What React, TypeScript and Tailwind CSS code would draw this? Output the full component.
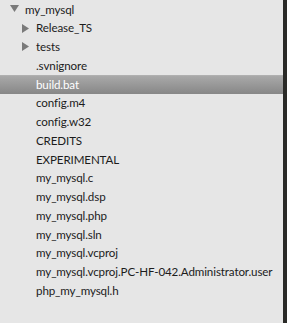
import React from "react";

const files = [
  ".svnignore",
  "build.bat",
  "config.m4",
  "config.w32",
  "CREDITS",
  "EXPERIMENTAL",
  "my_mysql.c",
  "my_mysql.dsp",
  "my_mysql.php",
  "my_mysql.sln",
  "my_mysql.vcproj",
  "my_mysql.vcproj.PC-HF-042.Administrator.user",
  "php_my_mysql.h",
];

function Down() {
  return (
    <svg width="9" height="8" viewBox="0 0 9 8">
      <polygon points="0,0 9,0 4.5,7" fill="#7a7a7a" />
    </svg>
  );
}
function Right() {
  return (
    <svg width="8" height="9" viewBox="0 0 8 9">
      <polygon points="0,0 7,4.5 0,9" fill="#7a7a7a" />
    </svg>
  );
}

export default function App() {
  return (
    <div
      className="flex w-[287px] h-[323px] bg-[#e6e6e6] overflow-hidden"
      style={{ fontFamily: 'Lato, sans-serif' }}
    >
      <div className="flex-1 flex flex-col text-[11.6px] tracking-[-0.12px] text-[#1c1c1c] whitespace-nowrap">
        <div className="flex items-center h-[18.75px] pl-[10px] gap-[6px]">
          <Down />
          <span>my_mysql</span>
        </div>
        {["Release_TS", "tests"].map((d) => (
          <div key={d} className="flex items-center h-[18.75px] pl-[22px] gap-[6px]">
            <Right />
            <span>{d}</span>
          </div>
        ))}
        {files.map((f) => (
          <div
            key={f}
            className={
              f === "build.bat"
                ? "flex items-center h-[18.75px] pl-[36px] text-white bg-gradient-to-b from-[#a9a9a9] to-[#878787] border-t border-[#b0b0b0]"
                : "flex items-center h-[18.75px] pl-[36px]"
            }
          >
            <span>{f}</span>
          </div>
        ))}
      </div>
      <div className="w-[4px] h-full bg-[#2a2a27] shrink-0" />
    </div>
  );
}
